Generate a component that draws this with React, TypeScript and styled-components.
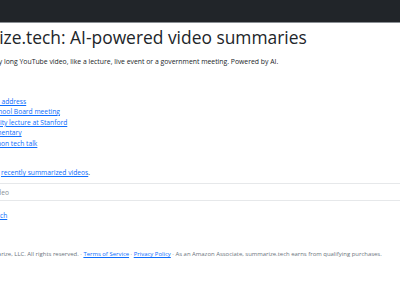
import React from "react";
import styled, {createGlobalStyle} from "styled-components";

const GlobalStyle = createGlobalStyle`
  html, body {
    margin: 0;
    padding: 0;
    background: #fff;
    overflow: hidden;
  }
  body {
    font-family: "Open Sans", "Noto Sans", sans-serif;
    color: #212529;
  }
`;

const Navbar = styled.nav`
  height: 22px;
  background: #212529;
  border-bottom: 1px solid #8a8f94;
`;

// the page is scrolled sideways in the reference, so the column starts left of the frame
const Main = styled.main`
  margin-left: -70px;
  width: 520px;
`;

const Title = styled.h1`
  margin: 0;
  padding-top: 2px;
  font-size: 17.4px;
  font-weight: 500;
  line-height: 24px;
  color: #212529;
`;

const Lead = styled.p`
  margin: 8px 0 0;
  padding-left: 2px;
  font-size: 6.85px;
  line-height: 10px;
  color: #212529;
`;

const Examples = styled.ul`
  list-style: none;
  margin: 29.5px 0 0;
  padding: 0;
  li {
    font-size: 6.7px;
    line-height: 10.6px;
  }
`;

const Link = styled.a`
  color: #0d6efd;
  text-decoration: underline;
`;

const Recent = styled.p`
  margin: 19px 0 0;
  font-size: 6.7px;
  line-height: 10px;
`;

const UrlInput = styled.div`
  margin-top: 5px;
  height: 18px;
  padding: 1px 0 0 4px;
  box-sizing: border-box;
  border-top: 1px solid #e6e8ea;
  border-bottom: 1px solid #e6e8ea;
  font-size: 6.7px;
  line-height: 16px;
  color: #8a8f94;
`;

const Action = styled.p`
  margin: 9.5px 0 0;
  font-size: 6.7px;
  line-height: 10px;
`;

const Footer = styled.footer`
  margin-top: 28px;
  font-size: 5.95px;
  line-height: 10px;
  color: #6c757d;
`;

const examples = [
  "The State of the Union address",
  "A Sacramento Area School Board meeting",
  "The art history university lecture at Stanford",
  "A 1980s wildlife documentary",
  "A three-hour-long Python tech talk",
];

export default function App() {
  return (
    <>
      <GlobalStyle />
      <Navbar />
      <Main>
        <Title>Summarize.tech: AI-powered video summaries</Title>
        <Lead>
          Get a summary of any long YouTube video, like a lecture, live event or a government meeting. Powered by AI.
        </Lead>
        <Examples>
          {examples.map((e) => (
            <li key={e}>
              <Link href="#">{e}</Link>
            </li>
          ))}
        </Examples>
        <Recent>
          Or check out the most <Link href="#">recently summarized videos</Link>.
        </Recent>
        <UrlInput>Paste a link to any video</UrlInput>
        <Action>
          Looking for talks? <Link href="#">Search</Link>
        </Action>
        <Footer>
          Copyright © 2024 Summarize, LLC. All rights reserved. · <Link href="#">Terms of Service</Link> ·{" "}
          <Link href="#">Privacy Policy</Link> · As an Amazon Associate, summarize.tech earns from qualifying purchases.
        </Footer>
      </Main>
    </>
  );
}
